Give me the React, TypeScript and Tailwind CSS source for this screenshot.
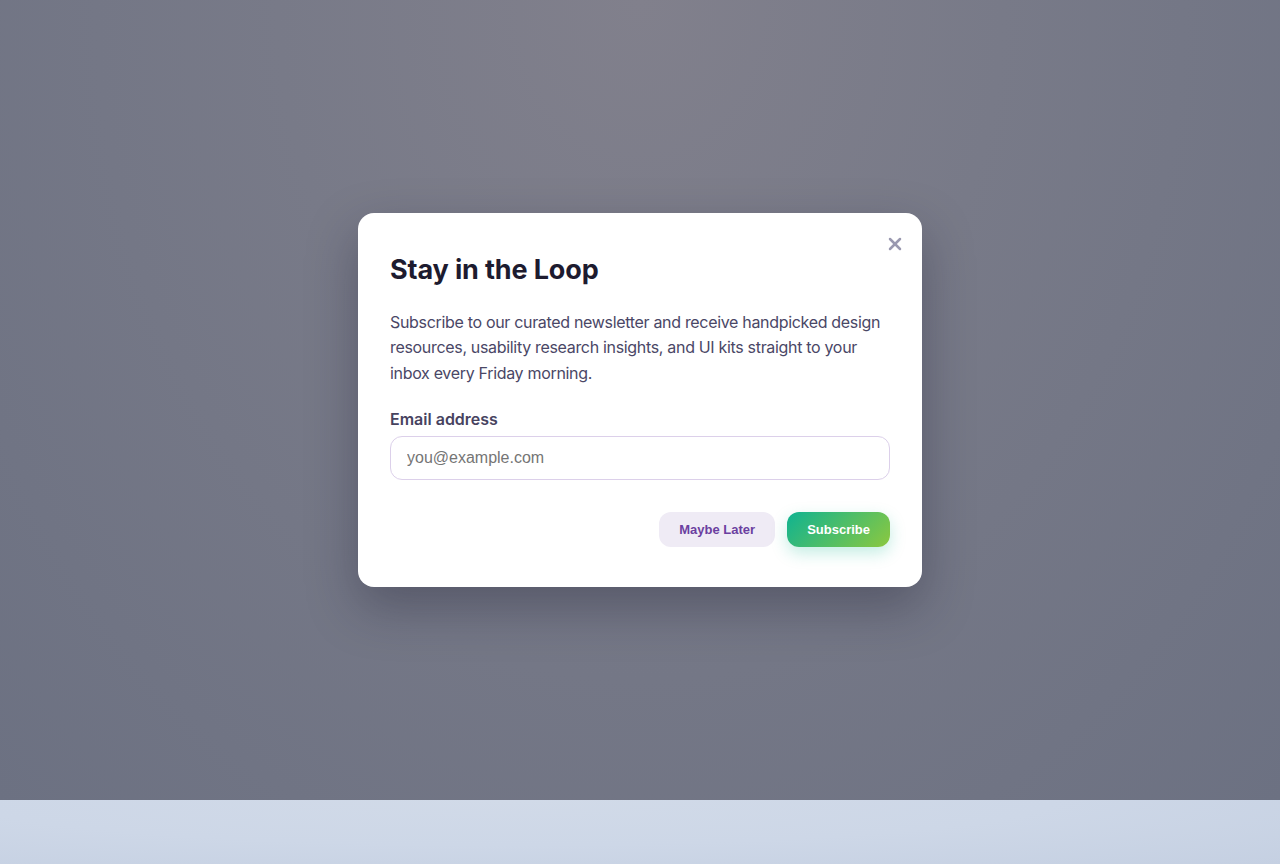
import { X } from 'lucide-react';

export default function App() {
  return (
    <div className="min-h-screen w-full flex flex-col bg-[#cbd5e6] font-['Inter',sans-serif]">
      {/* Overlay */}
      <div className="h-[800px] w-full bg-[radial-gradient(ellipse_at_50%_0%,#81808c_0%,#787a88_40%,#6c7182_100%)] flex items-center justify-center">
        {/* Modal */}
        <div className="relative w-[564px] bg-white rounded-2xl px-8 pt-10 pb-10 shadow-[0_20px_50px_rgba(30,30,50,0.35)]">
          <button className="absolute top-[21px] right-[17px] w-5 h-5 flex items-center justify-center text-[#9a99b0]">
            <X size={20} strokeWidth={3} />
          </button>

          <h2 className="text-[27px] leading-[33px] font-bold text-[#1d1b2f] tracking-[-0.005em]">Stay in the Loop</h2>

          <p className="mt-6 text-base leading-[25.6px] tracking-[-0.02em] text-[#4a4766]">
            Subscribe to our curated newsletter and receive handpicked design resources, usability research insights, and UI kits straight to your inbox every Friday morning.
          </p>

          <label className="block mt-[21px] text-base leading-6 font-semibold text-[#47435f]">Email address</label>
          <input
            type="email"
            placeholder="you@example.com"
            className="mt-[5px] w-full h-[44px] px-4 rounded-xl border border-[#dcd0ea] bg-white font-['Liberation_Sans',Arial,sans-serif] text-base text-[#333] placeholder:text-[#757575] outline-none"
          />

          <div className="mt-8 flex justify-end gap-3">
            <button className="h-[35px] px-5 rounded-xl bg-[#efebf5] text-[#6b3fa0] font-['Liberation_Sans',Arial,sans-serif] text-[13px] font-bold">
              Maybe Later
            </button>
            <button className="h-[35px] px-5 rounded-xl bg-[linear-gradient(135deg,#0fb391_0%,#8cc83f_100%)] text-white font-['Liberation_Sans',Arial,sans-serif] text-[13px] font-bold shadow-[0_6px_16px_rgba(16,185,145,0.25)]">
              Subscribe
            </button>
          </div>
        </div>
      </div>
      {/* Page below the overlay */}
      <div className="flex-1 w-full bg-[radial-gradient(ellipse_at_40%_0%,#d1dae8_0%,#cdd7e7_50%,#c5d0e2_100%)]" />
    </div>
  );
}
